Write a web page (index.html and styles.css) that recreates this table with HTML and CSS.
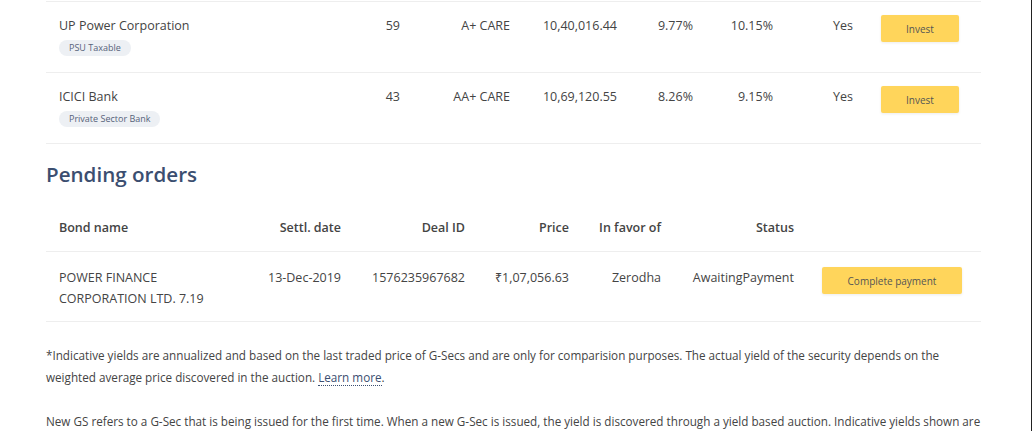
FILE: index.html
```html
<!DOCTYPE html>
<html lang="en">
<head>
  <meta charset="UTF-8" />
  <meta name="viewport" content="width=device-width, initial-scale=1.0"/>
  <title>Bonds | Coin</title>
  <link rel="stylesheet" href="styles.css">
</head>
<body>
  <div class="page">

    <table class="bonds">
      <colgroup>
        <col class="c-name"><col class="c-qty"><col class="c-rating"><col class="c-price">
        <col class="c-yield"><col class="c-yield2"><col class="c-tax"><col class="c-act">
      </colgroup>
      <tbody>
        <tr>
          <td>
            UP Power Corporation
            <div><span class="tag">PSU Taxable</span></div>
          </td>
          <td class="num">59</td>
          <td class="num">A+ CARE</td>
          <td class="num">10,40,016.44</td>
          <td class="num">9.77%</td>
          <td class="num">10.15%</td>
          <td class="num">Yes</td>
          <td><button class="btn btn-sm">Invest</button></td>
        </tr>
        <tr>
          <td>
            ICICI Bank
            <div><span class="tag">Private Sector Bank</span></div>
          </td>
          <td class="num">43</td>
          <td class="num">AA+ CARE</td>
          <td class="num">10,69,120.55</td>
          <td class="num">8.26%</td>
          <td class="num">9.15%</td>
          <td class="num">Yes</td>
          <td><button class="btn btn-sm">Invest</button></td>
        </tr>
      </tbody>
    </table>

    <h2 class="section-title">Pending orders</h2>

    <table class="orders">
      <colgroup>
        <col class="o-name"><col class="o-date"><col class="o-id"><col class="o-price">
        <col class="o-favor"><col class="o-status"><col class="o-act">
      </colgroup>
      <thead>
        <tr>
          <th>Bond name</th>
          <th class="num">Settl. date</th>
          <th class="num">Deal ID</th>
          <th class="num">Price</th>
          <th class="num">In favor of</th>
          <th class="num">Status</th>
          <th></th>
        </tr>
      </thead>
      <tbody>
        <tr>
          <td><div class="bond-name">POWER FINANCE CORPORATION LTD. 7.19</div></td>
          <td class="num">13-Dec-2019</td>
          <td class="num">1576235967682</td>
          <td class="num">₹1,07,056.63</td>
          <td class="num">Zerodha</td>
          <td class="num">AwaitingPayment</td>
          <td><button class="btn btn-md">Complete payment</button></td>
        </tr>
      </tbody>
    </table>

    <p class="note">
      *Indicative yields are annualized and based on the last traded price of G-Secs and are only for comparision purposes. The actual yield of the security depends on the weighted average price discovered in the auction. <a href="#">Learn more</a>.
    </p>
    <p class="note">
      New GS refers to a G-Sec that is being issued for the first time. When a new G-Sec is issued, the yield is discovered through a yield based auction. Indicative yields shown are based on the cut-off yields of previous auctions.
    </p>

  </div>
</body>
</html>
```

FILE: styles.css
```css
html {
  background: #fff;
}
body {
  margin: 0;
  min-height: 100vh;
  box-sizing: border-box;
  border-right: 1px solid #222;
  font-family: "Open Sans", sans-serif;
  font-size: 12.5px;
  color: #444;
  overflow: hidden;
}
.page {
  padding: 0 51px 0 46px;
}

table {
  width: 935px;
  border-collapse: collapse;
  table-layout: fixed;
}
td, th {
  padding: 13px 13px;
  line-height: 21px;
  text-align: left;
  vertical-align: top;
  font-weight: normal;
}
.num {
  text-align: right;
}

/* bonds list */
.bonds {
  margin-top: 1px;
}
.bonds tr {
  border-top: 1px solid #eee;
  border-bottom: 1px solid #eee;
}
.bonds td {
  padding-bottom: 15px;
}
.c-name { width: 287px; }
.c-qty { width: 80px; }
.c-rating { width: 110px; }
.c-price { width: 107px; }
.c-yield { width: 76px; }
.c-yield2 { width: 80px; }
.c-tax { width: 80px; }
.c-act { width: 115px; }

.tag {
  display: inline-block;
  margin-top: 3px;
  padding: 0 10px;
  height: 16px;
  line-height: 16px;
  border-radius: 8px;
  background: #edf0f4;
  color: #56627a;
  font-size: 9px;
}

.btn {
  border: none;
  border-radius: 2px;
  background: #ffd55b;
  color: #555;
  font-family: "Open Sans", sans-serif;
  cursor: pointer;
  box-shadow: 0 1px 3px rgba(0, 0, 0, 0.08);
}
.btn-sm {
  width: 78px;
  height: 27px;
  font-size: 10px;
  margin-left: 2px;
}
.btn-md {
  width: 140px;
  height: 27px;
  font-size: 10px;
  margin-left: 2px;
}

.section-title {
  margin: 15px 0 15px;
  font-size: 20.6px;
  line-height: 30px;
  font-weight: 600;
  color: #3b4e70;
}

/* pending orders */
.orders th {
  font-weight: 600;
  color: #444;
}
.orders thead tr,
.orders tbody tr {
  border-bottom: 1px solid #eee;
}
.orders tbody td {
  padding-top: 15px;
  padding-bottom: 12px;
}
.o-name { width: 208px; }
.o-date { width: 100px; }
.o-id { width: 124px; }
.o-price { width: 104px; }
.o-favor { width: 92px; }
.o-status { width: 133px; }
.o-act { width: 174px; }
.bond-name {
  max-width: 160px;
}

.note {
  width: 935px;
  margin: 22px 0 19px;
  font-size: 11.7px;
  line-height: 22px;
  color: #444;
}
.note a {
  color: #3b4e70;
  text-decoration: none;
  border-bottom: 1px dotted #3b4e70;
}
```
